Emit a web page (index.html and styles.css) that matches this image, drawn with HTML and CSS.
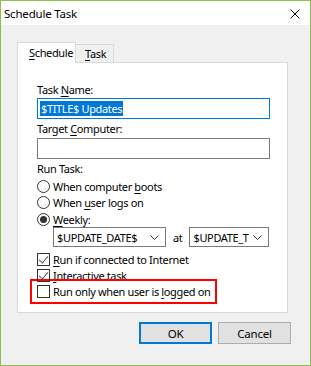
FILE: index.html
```html
<!DOCTYPE html>
<html lang="en">
<head>
    <meta charset="UTF-8">
    <meta name="viewport" content="width=device-width, initial-scale=1.0">
    <title>Schedule Task</title>
    <link rel="stylesheet" href="styles.css">
</head>
<body>
    <div class="window">
        <div class="titlebar">
            <span class="title">Schedule Task</span>
            <svg class="close-btn" width="10" height="10" viewBox="0 0 10 10">
                <path d="M0.5 0.5 L9.5 9.5 M9.5 0.5 L0.5 9.5" stroke="#000" stroke-width="1" fill="none"/>
            </svg>
        </div>
        <div class="client">
            <div class="tabs">
                <div class="tab active"><span><u>S</u>chedule</span></div>
                <div class="tab"><span><u>T</u>ask</span></div>
            </div>
            <div class="panel">
                <div class="label row-first"><span>Task <u>N</u>ame:</span></div>
                <div class="field focused"><span class="selected">$TITLE$ Updates</span></div>
                <div class="label"><span>Target <u>C</u>omputer:</span></div>
                <div class="field"></div>
                <div class="label"><span>Run Task:</span></div>

                <div class="option"><span class="radio"></span><span>When computer <u>b</u>oots</span></div>
                <div class="option tall"><span class="radio"></span><span>When <u>u</u>ser logs on</span></div>
                <div class="option"><span class="radio checked"></span><span><u>W</u>eekly:</span></div>

                <div class="combo-row">
                    <div class="combo date">
                        <span class="combo-text">$UPDATE_DATE$</span>
                        <svg class="chevron" width="9" height="5" viewBox="0 0 9 5"><path d="M0.5 0.5 L4.5 4.5 L8.5 0.5" stroke="#333" fill="none"/></svg>
                    </div>
                    <span class="at">at</span>
                    <div class="combo time">
                        <span class="combo-text">$UPDATE_T</span>
                        <svg class="chevron" width="9" height="5" viewBox="0 0 9 5"><path d="M0.5 0.5 L4.5 4.5 L8.5 0.5" stroke="#333" fill="none"/></svg>
                    </div>
                </div>

                <div class="option check-first"><span class="checkbox checked"></span><span><u>R</u>un if connected to Internet</span></div>
                <div class="option"><span class="checkbox checked"></span><span><u>I</u>nteractive task</span></div>
                <div class="highlight">
                    <div class="option"><span class="checkbox"></span><span>Run only when user is <u>l</u>ogged on</span></div>
                </div>
            </div>
            <div class="buttons">
                <button class="btn default">OK</button>
                <button class="btn">Cancel</button>
            </div>
        </div>
    </div>
</body>
</html>
```

FILE: styles.css
```css
/* Dialog frame */
body {
    margin: 0;
    font-family: "Noto Sans", "Liberation Sans", sans-serif;
    font-size: 11px;
    letter-spacing: -0.35px;
    color: #000;
    background: #f0f0f0;
}

u {
    text-decoration: underline;
    text-underline-offset: 2px;
}

.window {
    width: 311px;
    height: 366px;
    box-sizing: border-box;
    border: 1px solid #8fbf4a;
    background-color: #f0f0f0;
}

.titlebar {
    height: 24px;
    background-color: #fff;
    display: flex;
    align-items: center;
    justify-content: space-between;
    padding: 0 10px 0 3px;
}

.title {
    font-size: 11.5px;
    letter-spacing: -0.2px;
}

.close-btn {
    display: block;
    margin-top: 1px;
}

.client {
    padding: 17px 19px 0 16px;
}

/* Tabs */
.tabs {
    display: flex;
    align-items: flex-start;
    position: relative;
    z-index: 1;
    margin-bottom: -1px;
}

.tab {
    box-sizing: border-box;
    width: 38px;
    height: 18px;
    margin-top: 2px;
    padding: 0 0 0 9px;
    line-height: 17px;
    border: 1px solid #d9d9d9;
    border-bottom: none;
    border-left: none;
    background-color: #f0f0f0;
}

.tab.active {
    height: 21px;
    margin-top: 0;
    width: 59px;
    padding: 0 0 0 11px;
    line-height: 20px;
    border-left: 1px solid #d9d9d9;
    background-color: #fff;
}

/* Page */
.panel {
    width: 271px;
    box-sizing: border-box;
    border: 1px solid #d9d9d9;
    background-color: #fff;
    padding: 18px 0 8px 19px;
    display: flex;
    flex-direction: column;
}

.label {
    height: 19px;
    display: flex;
    align-items: center;
}

.label.row-first {
    height: 17px;
}

.field {
    width: 233px;
    height: 21px;
    box-sizing: border-box;
    border: 1px solid #7a7a7a;
    display: flex;
    align-items: center;
    padding-left: 2px;
}

.field.focused {
    border-color: #0078d7;
}

.selected {
    background-color: #0078d7;
    color: #fff;
    line-height: 15px;
    padding: 0 1px;
}

.option {
    height: 16px;
    display: flex;
    align-items: center;
    white-space: nowrap;
}

.option.tall {
    height: 17px;
}

.option.check-first {
    margin-top: 4px;
}

.radio {
    width: 13px;
    height: 13px;
    box-sizing: border-box;
    border: 1px solid #333;
    border-radius: 50%;
    margin-right: 3px;
    position: relative;
    flex-shrink: 0;
}

.radio.checked::after {
    content: "";
    position: absolute;
    left: 2px;
    top: 2px;
    width: 7px;
    height: 7px;
    border-radius: 50%;
    background-color: #333;
}

.checkbox {
    width: 13px;
    height: 13px;
    box-sizing: border-box;
    border: 1px solid #333;
    margin-right: 3px;
    position: relative;
    flex-shrink: 0;
}

.checkbox.checked::after {
    content: "";
    position: absolute;
    left: 3px;
    top: 0px;
    width: 4px;
    height: 8px;
    border-right: 1px solid #555;
    border-bottom: 1px solid #555;
    transform: rotate(40deg);
}

.combo-row {
    height: 20px;
    display: flex;
    align-items: center;
    padding-left: 16px;
}

.combo {
    height: 20px;
    box-sizing: border-box;
    border: 1px solid #7a7a7a;
    display: flex;
    align-items: center;
    justify-content: space-between;
    padding: 0 6px 0 3px;
    overflow: hidden;
}

.combo.date {
    width: 113px;
}

.combo.time {
    width: 80px;
}

.combo-text {
    white-space: nowrap;
}

.chevron {
    display: block;
    flex-shrink: 0;
    margin-left: 4px;
}

.at {
    margin: 0 7px 0 7px;
}

.highlight {
    align-self: flex-start;
    width: 187px;
    box-sizing: border-box;
    margin: -4px 0 0 -7px;
    padding: 2px 0 3px 5px;
    border: 2px solid #f00;
}

/* Buttons */
.buttons {
    display: flex;
    justify-content: flex-end;
    gap: 6px;
    margin-top: 9px;
}

.btn {
    width: 73px;
    height: 22px;
    box-sizing: border-box;
    border: 1px solid #adadad;
    background-color: #e1e1e1;
    font-family: inherit;
    font-size: 11.5px;
    letter-spacing: -0.2px;
    color: #000;
    padding: 0;
}

.btn.default {
    border: 2px solid #0078d7;
}
```
